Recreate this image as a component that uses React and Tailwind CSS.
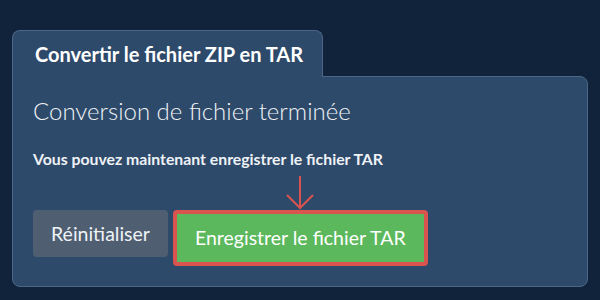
export default function App() {
  return (
    <div
      className="w-[600px] h-[300px] bg-[#10233a] pt-[30px] px-[12px] overflow-hidden"
      style={{ fontFamily: 'Lato, "Noto Sans", sans-serif' }}
    >
      <div className="flex">
        <div className="relative z-10 -mb-px h-[47px] flex items-center pl-[22px] pr-[19px] bg-[#2e4a6a] border border-b-0 border-[#4b6686] rounded-t-lg text-white font-bold text-[20px]">
          Convertir le fichier ZIP en TAR
        </div>
      </div>
      <div className="w-[576px] h-[211px] bg-[#2e4a6a] border border-[#4b6686] rounded-b-lg rounded-tr-lg px-[20px] pt-[18px]">
        <h2 className="text-[24px] font-light text-[#eef2f6] leading-[32px]">Conversion de fichier terminée</h2>
        <p className="mt-[22px] text-[15.8px] font-bold text-[#eef2f6] leading-[20px]">
          Vous pouvez maintenant enregistrer le fichier TAR
        </p>
        <div className="flex items-start gap-[5px] mt-[6px]">
          <button className="mt-[35px] h-[47px] px-[18px] rounded bg-[#4f5f71] text-[#eef2f6] text-[19.5px]">
            Réinitialiser
          </button>
          <div className="flex flex-col items-center">
            <svg width="28" height="35" viewBox="0 0 28 35" className="block">
              <path d="M14 1 V33 M1 20 L14 33 L27 20" fill="none" stroke="#d9534f" strokeWidth="2" />
            </svg>
            <button className="h-[56px] px-[18px] rounded bg-[#5cb85c] border-4 border-[#d9534f] text-white text-[19.5px]">
              Enregistrer le fichier TAR
            </button>
          </div>
        </div>
      </div>
    </div>
  );
}
